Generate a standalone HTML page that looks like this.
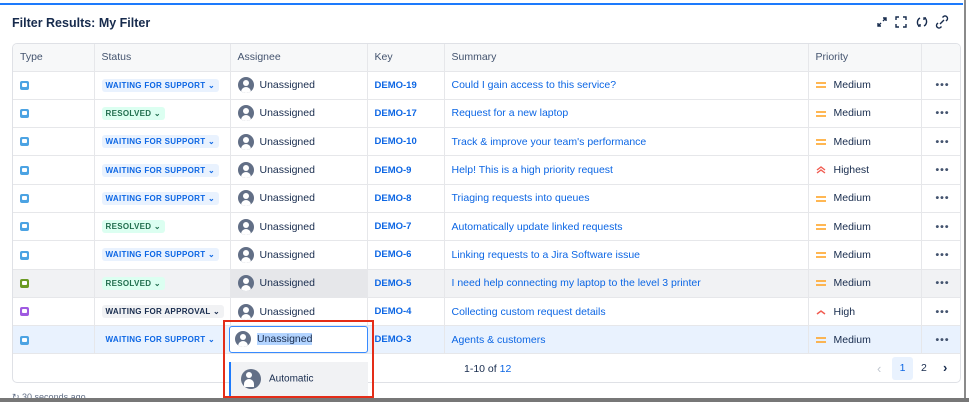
<!DOCTYPE html>
<html><head><meta charset="utf-8"><style>
*{box-sizing:border-box;margin:0;padding:0}
body{width:969px;height:402px;overflow:hidden;background:#fff;font-family:"Liberation Sans",sans-serif;color:#172b4d;position:relative}
.topbar{position:absolute;left:0;top:3px;width:963px;height:2px;background:#1d7afc}
.rb{position:absolute;left:964px;top:0;width:5px;height:402px;background:#fff;border-left:2px solid #8a8a8a}
.bb{position:absolute;left:0;top:398px;width:969px;height:4px;background:#777}
h1{position:absolute;left:12px;top:16px;font-size:12.5px;font-weight:600;color:#172b4d}
.tools{position:absolute;left:874px;top:14px}
.wrap{position:absolute;left:12px;top:43px;width:949px;height:340px;border:1px solid #dfe1e6;border-radius:5px;overflow:hidden}
table{border-collapse:collapse;table-layout:fixed;width:949px}
td,th{border-right:1px solid #e6e7ea;border-bottom:1px solid #e6e7ea;font-size:10.5px;text-align:left;padding:0 0 0 7px;white-space:nowrap;overflow:hidden}
th{height:27px;background:#f7f8f9;font-weight:normal;color:#44546f}
td{height:28.3px}
td:last-child,th:last-child{border-right:none}
.ic{display:inline-block;width:9px;height:9px;border-radius:2px;background:#4ca3e3;vertical-align:middle;position:relative}
.ic:after{content:"";position:absolute;left:2px;top:2px;width:5px;height:4px;background:#fff;border-radius:1px}
.lz{display:inline-block;font-size:8px;font-weight:bold;padding:2px 4px;border-radius:3px;letter-spacing:.3px}
.ws{background:#e9f2fe;color:#0c66e4}.rs{background:#dcfff1;color:#216e4e}.wa{background:#f1f2f4;color:#172b4d}
.av{display:inline-block;width:16px;height:16px;border-radius:50%;background:#626f86;vertical-align:middle;margin-right:6px;position:relative;overflow:hidden}
.av:before{content:"";position:absolute;left:5px;top:3px;width:6px;height:6px;border-radius:50%;background:#fff}
.av:after{content:"";position:absolute;left:3px;top:10px;width:10px;height:8px;border-radius:5px 5px 0 0;background:#fff}
.k{color:#0c66e4;font-weight:bold;font-size:9.5px}
.s{color:#0c66e4}
.pr svg{vertical-align:middle;margin-right:8px}
.dots{color:#44546f;font-weight:bold;letter-spacing:1px;padding-left:14px}
tr.g td{background:#f1f2f4}tr.g td.a{background:#e6e7ea}
tr.b td{background:#e9f2fe}
.foot{position:absolute;left:0;top:310px;width:949px;height:30px;font-size:10.5px}
.red{position:absolute;left:223px;top:320px;width:151px;height:78px;border:2px solid #e42d18}
.inp{position:absolute;left:229px;top:326px;width:139px;height:27px;border:1.5px solid #388bff;border-radius:3px;background:#fff;font-size:10.5px;padding:4px 5px}
.menu{position:absolute;left:229px;top:362px;width:139px;height:35px;background:#f1f2f4;border-left:2px solid #1d7afc;font-size:10px;padding:7px 10px}
</style></head><body>
<div class="topbar"></div>
<h1>Filter Results: My Filter</h1>
<div class="tools"><svg width="90" height="16" viewBox="0 0 90 16" fill="none" stroke="#172b4d" stroke-width="1.4">
<path d="M4 12l3-3M4 9v3h3M12 4l-3 3M12 7V4H9"/>
<path d="M22 6V3h3M29 3h3v3M32 10v3h-3M25 13h-3v-3"/>
<path d="M46 4a5 5 0 0 0-1 8M44 12h2v-2M50 12a5 5 0 0 0 1-8M52 4h-2v2"/>
<path d="M66 10l4-4M64 9l-1 1a2.5 2.5 0 0 0 3.5 3.5l1-1M72 7l1-1a2.5 2.5 0 0 0-3.5-3.5l-1 1"/>
</svg></div>
<div class="wrap">
<table>
<colgroup><col style="width:81px"><col style="width:136px"><col style="width:137px"><col style="width:77px"><col style="width:364px"><col style="width:113px"><col style="width:41px"></colgroup>
<tr><th>Type</th><th>Status</th><th>Assignee</th><th>Key</th><th>Summary</th><th>Priority</th><th></th></tr>
<tr><td><span class="ic"></span></td><td><span class="lz ws">WAITING FOR SUPPORT ⌄</span></td><td><span class="av"></span>Unassigned</td><td class="k">DEMO-19</td><td class="s">Could I gain access to this service?</td><td class="pr"><svg width="10" height="8"><path d="M0 2h10M0 6h10" stroke="#ff9f1a" stroke-width="1.6"/></svg>Medium</td><td class="dots">•••</td></tr>
<tr><td><span class="ic"></span></td><td><span class="lz rs">RESOLVED ⌄</span></td><td><span class="av"></span>Unassigned</td><td class="k">DEMO-17</td><td class="s">Request for a new laptop</td><td class="pr"><svg width="10" height="8"><path d="M0 2h10M0 6h10" stroke="#ff9f1a" stroke-width="1.6"/></svg>Medium</td><td class="dots">•••</td></tr>
<tr><td><span class="ic"></span></td><td><span class="lz ws">WAITING FOR SUPPORT ⌄</span></td><td><span class="av"></span>Unassigned</td><td class="k">DEMO-10</td><td class="s">Track &amp; improve your team's performance</td><td class="pr"><svg width="10" height="8"><path d="M0 2h10M0 6h10" stroke="#ff9f1a" stroke-width="1.6"/></svg>Medium</td><td class="dots">•••</td></tr>
<tr><td><span class="ic"></span></td><td><span class="lz ws">WAITING FOR SUPPORT ⌄</span></td><td><span class="av"></span>Unassigned</td><td class="k">DEMO-9</td><td class="s">Help! This is a high priority request</td><td class="pr"><svg width="10" height="8"><path d="M1 4l4-3 4 3M1 7l4-3 4 3" stroke="#f15b50" stroke-width="1.4" fill="none"/></svg>Highest</td><td class="dots">•••</td></tr>
<tr><td><span class="ic"></span></td><td><span class="lz ws">WAITING FOR SUPPORT ⌄</span></td><td><span class="av"></span>Unassigned</td><td class="k">DEMO-8</td><td class="s">Triaging requests into queues</td><td class="pr"><svg width="10" height="8"><path d="M0 2h10M0 6h10" stroke="#ff9f1a" stroke-width="1.6"/></svg>Medium</td><td class="dots">•••</td></tr>
<tr><td><span class="ic"></span></td><td><span class="lz rs">RESOLVED ⌄</span></td><td><span class="av"></span>Unassigned</td><td class="k">DEMO-7</td><td class="s">Automatically update linked requests</td><td class="pr"><svg width="10" height="8"><path d="M0 2h10M0 6h10" stroke="#ff9f1a" stroke-width="1.6"/></svg>Medium</td><td class="dots">•••</td></tr>
<tr><td><span class="ic"></span></td><td><span class="lz ws">WAITING FOR SUPPORT ⌄</span></td><td><span class="av"></span>Unassigned</td><td class="k">DEMO-6</td><td class="s">Linking requests to a Jira Software issue</td><td class="pr"><svg width="10" height="8"><path d="M0 2h10M0 6h10" stroke="#ff9f1a" stroke-width="1.6"/></svg>Medium</td><td class="dots">•••</td></tr>
<tr class="g"><td><span class="ic" style="background:#6a9a23"></span></td><td><span class="lz rs">RESOLVED ⌄</span></td><td class="a"><span class="av"></span>Unassigned</td><td class="k">DEMO-5</td><td class="s">I need help connecting my laptop to the level 3 printer</td><td class="pr"><svg width="10" height="8"><path d="M0 2h10M0 6h10" stroke="#ff9f1a" stroke-width="1.6"/></svg>Medium</td><td class="dots">•••</td></tr>
<tr><td><span class="ic" style="background:#9f5ae1"></span></td><td><span class="lz wa">WAITING FOR APPROVAL ⌄</span></td><td><span class="av"></span>Unassigned</td><td class="k">DEMO-4</td><td class="s">Collecting custom request details</td><td class="pr"><svg width="10" height="8"><path d="M1 6l4-3 4 3" stroke="#f15b50" stroke-width="1.5" fill="none"/></svg>High</td><td class="dots">•••</td></tr>
<tr class="b"><td><span class="ic"></span></td><td><span class="lz ws" style="background:none">WAITING FOR SUPPORT ⌄</span></td><td></td><td class="k">DEMO-3</td><td class="s">Agents &amp; customers</td><td class="pr"><svg width="10" height="8"><path d="M0 2h10M0 6h10" stroke="#ff9f1a" stroke-width="1.6"/></svg>Medium</td><td class="dots">•••</td></tr>
</table>
<div class="foot">
<span style="position:absolute;left:451px;top:9px">1-10 of <span style="color:#0c66e4">12</span></span>
<span style="position:absolute;left:864px;top:7px;color:#c1c7d0;font-size:13px">‹</span>
<span style="position:absolute;left:879px;top:3px;width:21px;height:23px;background:#e9f2fe;color:#0c66e4;text-align:center;line-height:23px;border-radius:3px">1</span>
<span style="position:absolute;left:908px;top:8px">2</span>
<span style="position:absolute;left:930px;top:6px;font-weight:bold;font-size:13px">›</span>
</div>
</div>
<div style="position:absolute;left:12px;top:392px;font-size:9px;color:#626f86">↻ 30 seconds ago</div>
<div class="inp"><span class="av"></span><span style="background:#b3d4ff">Unassigned</span></div>
<div class="menu"><span class="av" style="width:20px;height:20px;margin-right:8px;vertical-align:middle"></span>Automatic</div>
<div class="red"></div>
<div class="rb"></div>
<div class="bb"></div>
</body></html>
